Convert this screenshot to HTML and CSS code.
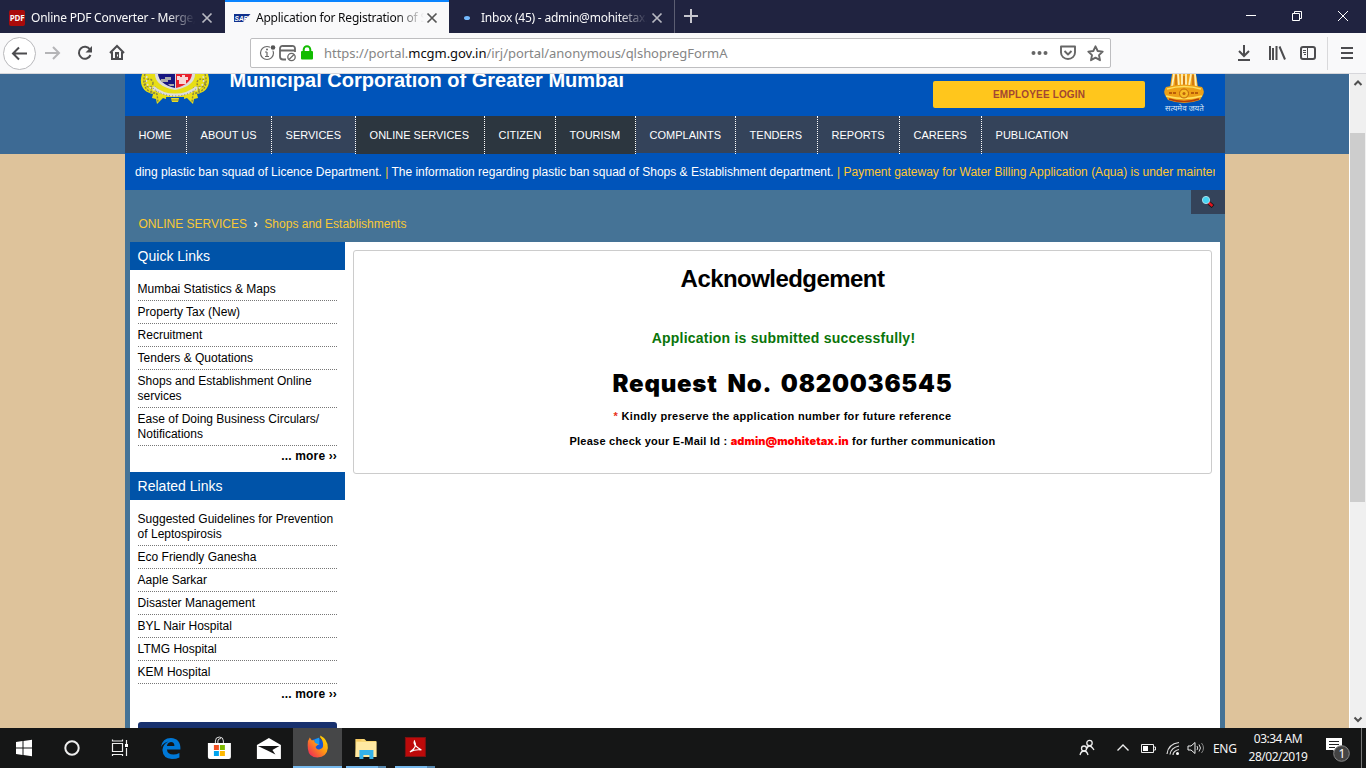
FILE: index.html
```html
<!DOCTYPE html>
<html lang="en">
<head>
<meta charset="utf-8">
<title>Application for Registration of Shops</title>
<link rel="stylesheet" href="styles.css">
</head>
<body>
<div class="window">
  <header class="tabs">
    <div class="tab">
      <span class="fav-pdf">PDF</span>
      <span class="tab-title t1">Online PDF Converter - Merge, convert</span>
      <svg class="tab-close" width="12" height="12" viewBox="0 0 12 12"><path d="M1.5 1.5l9 9m0-9l-9 9"/></svg>
    </div>
    <div class="tab active">
      <svg class="fav-sap" width="17" height="10" viewBox="0 0 17 10"><path d="M0 1h16.500L9 9H0z" fill="#10308c"/><text x="0.500" y="7.500" textLength="13.500" lengthAdjust="spacingAndGlyphs">SAP</text></svg>
      <span class="tab-title t2">Application for Registration of Shops</span>
      <svg class="tab-close" width="12" height="12" viewBox="0 0 12 12"><path d="M1.5 1.5l9 9m0-9l-9 9"/></svg>
    </div>
    <div class="tab">
      <span class="fav-dot"></span>
      <span class="tab-title t3">Inbox (45) - admin@mohitetax.in</span>
      <svg class="tab-close" width="12" height="12" viewBox="0 0 12 12"><path d="M1.5 1.5l9 9m0-9l-9 9"/></svg>
    </div>
    <svg class="new-tab" width="32" height="33" viewBox="0 0 32 33"><path d="M16 9v14M9 16h14"/></svg>
    <div class="controls">
      <svg width="46" height="32" viewBox="0 0 46 32"><path d="M18 15.500h10"/></svg>
      <svg width="46" height="32" viewBox="0 0 46 32"><path d="M18.500 13.500h7v7h-7zM20.500 13v-1.500h7v7h-1.500"/></svg>
      <svg width="46" height="32" viewBox="0 0 46 32"><path d="M18 11l10 10m0-10l-10 10"/></svg>
    </div>
  </header>

  <div class="toolbar">
    <svg class="tool back" width="33" height="33" viewBox="0 0 33 33"><circle cx="16.500" cy="16.500" r="16"/><path d="M24 16.500H10m6-6l-6 6 6 6"/></svg>
    <svg class="tool dim" width="32" height="32" viewBox="0 0 32 32"><path d="M9 16h14m-6-6l6 6-6 6"/></svg>
    <svg class="tool" width="32" height="32" viewBox="0 0 32 32"><path d="M22 12.500A6 6 0 1 0 22.500 18"/><path class="solid" d="M24 9v6.500h-6.500z"/></svg>
    <svg class="tool" width="32" height="32" viewBox="0 0 32 32"><path d="M10 16l7-7 7 7M12 15v7h10v-7"/><path class="solid" d="M15 15h4v6h-4z"/><path stroke="#f9f9fa" stroke-width="1" d="M17.500 17.500v2"/></svg>
    <div class="urlbar">
      <svg width="50" height="28" viewBox="0 0 50 28">
        <g fill="none" stroke="#686868" stroke-width="1.200"><circle cx="16" cy="14" r="6.500"/><path d="M16 13v4.500M14 17.500h4M14 13h2"/></g>
        <circle cx="16" cy="10.500" r="1" fill="#686868"/><circle cx="22" cy="8.500" r="3.200" fill="#fff"/><circle cx="22" cy="8.500" r="2.300" fill="#555"/>
        <g fill="none" stroke="#686868" stroke-width="1.800"><path d="M35 20.500h-3a3 3 0 0 1-3-3v-8a2.500 2.500 0 0 1 3-2.500h9a2.500 2.500 0 0 1 3 2.500V13M29 11.500h15"/></g>
        <g fill="#fff" stroke="#686868" stroke-width="1.300"><circle cx="40.500" cy="18" r="3.700"/><path d="M38 20.500l5-5"/></g>
      </svg>
      <svg class="lock" width="12" height="28" viewBox="0 0 12 28"><path d="M2.700 13v-2.500a3.300 3.300 0 0 1 6.600 0V13" fill="none" stroke="#12bc00" stroke-width="2"/><rect y="12" width="12" height="8.500" rx="1" fill="#12bc00"/></svg>
      <span class="url">https://portal.<b>mcgm.gov.in</b>/irj/portal/anonymous/qlshopregFormA</span>
      <svg class="url-actions" width="80" height="28" viewBox="0 0 80 28">
        <g fill="#666"><circle cx="9.500" cy="14" r="2"/><circle cx="15.500" cy="14" r="2"/><circle cx="21.500" cy="14" r="2"/></g>
        <g fill="none" stroke="#666" stroke-width="1.900" stroke-linejoin="round"><path d="M37 7.500h14v6a7 6.500 0 0 1-14 0z"/><path d="M40.500 12l3.500 3.500 3.500-3.500"/><path d="M71.500 7.300l2.200 4.700 5 .6-3.700 3.500 1 5.100-4.500-2.500-4.500 2.500 1-5.100-3.700-3.500 5-.6z"/></g>
      </svg>
    </div>
    <div class="tools-right">
      <svg class="tool" width="32" height="32" viewBox="0 0 32 32"><path d="M16 8v11m-5-5l5 5 5-5M10 23h12"/></svg>
      <svg class="tool" width="32" height="32" viewBox="0 0 32 32"><path d="M10 9v14M13 11v12M16.500 9v14M19.500 9.500l5.500 13"/></svg>
      <svg class="tool" width="32" height="32" viewBox="0 0 32 32"><rect x="9" y="10" width="14" height="12" rx="2"/><path stroke-width="1" d="M15.500 10v12M11 13.500h3M11 15.500h3M12 17.500h2"/></svg>
      <i class="tool-sep"></i>
      <svg class="tool menu" width="32" height="32" viewBox="0 0 32 32"><path d="M10 11h12M10 16h12M10 21h12"/></svg>
    </div>
  </div>

  <div class="viewport">
    <main class="page">
      <div class="site">
        <div class="masthead">
          <svg class="crest" width="72" height="32" viewBox="0 0 72 32">
            <path d="M3 0C-1 12 6 19 14 20l-1 4 4 1 1 5 6-6 12 4 12-4 6 6 1-5 4-1-1-4c8-1 15-8 11-20z" fill="#e7de16"/>
            <g fill="none" stroke="#8b8740" stroke-width="1.400" stroke-dasharray="2 1.300"><path d="M6 0q-5 17 12 20l1 8M66 0q5 17-12 20l-1 8"/><circle cx="10" cy="9" r="4"/><circle cx="62" cy="9" r="4"/><circle cx="15" cy="16" r="3"/><circle cx="57" cy="16" r="3"/></g>
            <g fill="none" stroke="#ddd" stroke-width="1.500" stroke-dasharray="2 2"><path d="M8 2q-3 10 9 15M64 2q3 10-9 15"/></g>
            <path d="M16 0q0 12 20 16 20-4 20-16z" fill="#ddd"/>
            <path d="M19 0q1 10 17 14V0z" fill="#171681"/><path d="M37 0v14q15-4 16-14z" fill="#e9202c"/>
            <path d="M22 5h4V3h6v3h-3v2h-7zM29 10h6v2h-4z" fill="#aaa"/><path d="M38 2h3v1h2V1h3v2h3v3h-2v4h-7V6h-2z" fill="#f7d7d7"/>
            <path d="M14 13q9 8 22 8t22-8" fill="none" stroke="#ddd" stroke-width="3"/><path d="M14 14q9 8 22 8t22-8" fill="none" stroke="#777" stroke-dasharray="1 2"/>
            <path d="M27 23h18v8H27z" fill="#0054ba"/><path d="M32 24h8l-1 4h-6z" fill="#e8dd25"/><path d="M32 26h8" stroke="#8b8740"/>
          </svg>
          <h1>Municipal Corporation of Greater Mumbai</h1>
          <a class="login">EMPLOYEE LOGIN</a>
          <div class="national">
            <svg width="42" height="31" viewBox="0 0 42 31"><path d="M9 0h24l2 13H7z" fill="#f0a51b"/><path d="M11 0l-2 13M15 0l1 12M19 0v13M23 0v13M28 0l-2 12M32 0l1 13" stroke="#fff1b8" stroke-width="1.800"/><path d="M13 1v11M21 2v11M30 1v11" stroke="#b4520b"/><path d="M3 13q18-5 36 0 3 4 1 8l-3 5q-16 6-32 0l-3-5q-2-4 1-8z" fill="#eda016"/><path d="M4 15q17-5 34 0M3 22q18 5 36 0" fill="none" stroke="#ffdf5d" stroke-width="1.500"/><path d="M6 25q15 5 30 0" fill="none" stroke="#b33d08" stroke-width="1.500"/><circle cx="21" cy="19.500" r="4.500" fill="#f8bd27" stroke="#bd640a"/><circle cx="21" cy="19.500" r="1.500" fill="#bd640a"/><path d="M6 19h8M28 19h8" stroke="#b95d09" stroke-width="2" stroke-dasharray="3 1"/></svg>
            <span>सत्यमेव जयते</span>
          </div>
        </div>
        <nav class="nav">
          <a>HOME</a><a>ABOUT US</a><a>SERVICES</a><a class="dark">ONLINE SERVICES</a><a class="dark">CITIZEN</a><a class="dark">TOURISM</a><a>COMPLAINTS</a><a>TENDERS</a><a>REPORTS</a><a>CAREERS</a><a>PUBLICATION</a>
        </nav>
        <div class="ticker"><p>ding plastic ban squad of Licence Department. <i>|</i> The information regarding plastic ban squad of Shops &amp; Establishment department. <i>| Payment gateway for Water Billing Application (Aqua) is under maintenance</i></p></div>
        <div class="subhead">
          <p class="crumbs"><a>ONLINE SERVICES</a><b>›</b><a>Shops and Establishments</a></p>
          <span class="search"><svg width="14" height="14" viewBox="0 0 14 14"><path d="M8 8l4 3.500" stroke="#111" stroke-width="4"/><path d="M7.500 7.500l4 3.500" stroke="#e0141f" stroke-width="2.400"/><circle cx="5" cy="5" r="3.600" fill="#45d4f5" stroke="#a9dce9"/></svg></span>
        </div>
        <div class="body">
          <aside class="sidebar">
            <h2>Quick Links</h2>
            <ul>
              <li>Mumbai Statistics &amp; Maps</li><li>Property Tax (New)</li><li>Recruitment</li><li>Tenders &amp; Quotations</li><li>Shops and Establishment Online services</li><li>Ease of Doing Business Circulars/ Notifications</li>
            </ul>
            <a class="more">... more ››</a>
            <h2>Related Links</h2>
            <ul>
              <li>Suggested Guidelines for Prevention of Leptospirosis</li><li>Eco Friendly Ganesha</li><li>Aaple Sarkar</li><li>Disaster Management</li><li>BYL Nair Hospital</li><li>LTMG Hospital</li><li>KEM Hospital</li>
            </ul>
            <a class="more">... more ››</a>
            <div class="banner"></div>
          </aside>
          <section class="ack">
            <h2>Acknowledgement</h2>
            <p class="ok">Application is submitted successfully!</p>
            <p class="request">Request No. 0820036545</p>
            <p class="note keep"><i>*</i> Kindly preserve the application number for future reference</p>
            <p class="note mail">Please check your E-Mail Id : <b>admin@mohitetax.in</b> for further communication</p>
          </section>
        </div>
      </div>
    </main>
    <div class="scrollbar">
      <svg width="17" height="17" viewBox="0 0 17 17"><path d="M4.500 11L8 7.500l3.500 3.500"/></svg>
      <i class="thumb"></i>
      <svg class="down" width="17" height="17" viewBox="0 0 17 17"><path d="M4.500 6.500L8 10l3.500-3.500"/></svg>
    </div>
  </div>

  <footer class="taskbar">
    <svg class="app sys" viewBox="0 0 48 40"><path fill="#fff" d="M16 14l6.500-1v6.500H16zM23.500 12.900L32 11.700v7.800h-8.500zM16 20.500h6.500V27L16 26zM23.500 20.500H32v7.800l-8.500-1.200z"/></svg>
    <svg class="app sys" viewBox="0 0 48 40"><circle cx="24" cy="20" r="6.700" fill="none" stroke="#eee" stroke-width="2"/></svg>
    <svg class="app sys" viewBox="0 0 48 40"><path d="M16.500 11.500V13h10v-1.500M16.500 28v-1.500h10V28M16.500 15.500h10v8h-10zM30.500 12v4M30.500 20v8" fill="none" stroke="#eee" stroke-width="1.200"/><path d="M29 16h3v3h-3z" fill="#fff"/></svg>
    <svg class="app first" viewBox="0 0 48 40"><path d="M13.500 19Q15 10 23.500 10 33.500 10.500 33 21.500H19.500Q20 26.500 26 26.500q3 0 6-1.500v4.500Q29 31 24.500 31q-9-.500-9.500-9 .5-6 6-8.500-5 1-7.500 5.500zM19.500 18H27q0-4-3.500-4-3.500.5-4 4z" fill="#0078d7"/></svg>
    <svg class="app" viewBox="0 0 48 40"><path d="M19 15v-2q0-4 4-4t4 4v2M21.500 15v-2q0-2.500 3-2.500" fill="none" stroke="#ddd"/><path d="M11.500 15h23v14q0 2-2 2h-19q-2 0-2-2z" fill="#fff"/><path fill="#f25022" d="M17.500 17h5v5h-5z"/><path fill="#7fba00" d="M23.500 17h5v5h-5z"/><path fill="#00a4ef" d="M17.500 23h5v5h-5z"/><path fill="#ffb900" d="M23.500 23h5v5h-5z"/></svg>
    <svg class="app" viewBox="0 0 48 40"><path d="M11.500 17l12-7 12 7v14h-24z" fill="#fff"/><path d="M12.500 18H34l-7 4 3 4.500-8-4z" fill="#151515"/></svg>
    <svg class="app current" viewBox="0 0 48 40"><defs><linearGradient id="ff" x1="1" y1="0" x2="0" y2="1"><stop offset="0" stop-color="#ffe900"/><stop offset=".45" stop-color="#ff9813"/><stop offset="1" stop-color="#ed1663"/></linearGradient></defs><circle cx="23.500" cy="19.500" r="8.500" fill="#1557d5"/><path d="M21 12l5-2v8h-5z" fill="#1b9bef"/><path d="M14 14l2-4 2 3 3 0q-1 3 4 4l-3 3q2 4 5 2 3 0 3-4 0-5-3-8V8q8 4 8 13-1 9.500-11 10-9 0-10-9-.5-4 0-8z" fill="url(#ff)"/></svg>
    <svg class="app running" viewBox="0 0 48 40"><path d="M13 11h9l2 2h10v16H13z" fill="#f8d775"/><path d="M14 14h20v15H13z" fill="#ffe9a2"/><path d="M17 31v-9h14v9h-4v-4h-6v4z" fill="#35b2ea"/><path d="M14 12h5" stroke="#f6b84a"/></svg>
    <svg class="app running" viewBox="0 0 48 40"><rect x="14" y="9.500" width="20" height="19" fill="#bd0a0a" stroke="#7e1111"/><path d="M18.500 24q8-5 4.500-11-2 4 7 9-6-1-11.500 2z" fill="none" stroke="#fff" stroke-width="1.200"/></svg>
    <div class="tray">
      <svg width="20" height="20" viewBox="0 0 20 20"><g fill="none" stroke="#eee" stroke-width="1.300"><circle cx="12.500" cy="5" r="2.700"/><path d="M9.500 11q1-3 3-3t4.500 4"/><circle cx="7" cy="10.500" r="2.500"/><path d="M3 17q1-4 4-4t4 4"/></g></svg>
      <svg class="chev" width="14" height="20" viewBox="0 0 14 20"><path d="M1.500 12.500L7 7l5.500 5.500" fill="none" stroke="#eee" stroke-width="1.400"/></svg>
      <svg class="bat" width="17" height="20" viewBox="0 0 17 20"><path d="M1.500 6.500h12v8h-12zM13.500 9h2v3h-2" fill="none" stroke="#eee"/><path d="M3 8h5v5H3z" fill="#fff"/></svg>
      <svg class="wifi" width="15" height="20" viewBox="0 0 15 20"><g fill="none" stroke="#ddd" stroke-width="1.200"><path d="M1 16Q2 6 13 4.500M4 16.500q1-7 9-8.500M7 17q0-4 6-5.500"/></g><circle cx="11.500" cy="15.500" r="1.500" fill="#fff"/></svg>
      <svg class="vol" width="18" height="20" viewBox="0 0 18 20"><path d="M1 8h3l4-3.500v11L4 12H1z" fill="none" stroke="#eee"/><path d="M10 8q1.500 2 0 4M12 6.500q3 3.500 0 7" fill="none" stroke="#ddd"/><path d="M14.500 5q4 5 0 10" fill="none" stroke="#888"/></svg>
      <span class="lang">ENG</span>
      <span class="clock">03:34 AM<br>28/02/2019</span>
      <svg class="notif" width="26" height="28" viewBox="0 0 26 28"><path d="M1 4h16v12h-5v4l-4-4H1z" fill="#fff"/><path d="M4 7.500h10M4 10.500h10M4 13.500h6" stroke="#222"/><circle cx="16.500" cy="19.500" r="7.800" fill="#444" stroke="#888"/><text x="13.500" y="24">1</text></svg>
      <i class="desktop-line"></i>
    </div>
  </footer>
</div>
</body>
</html>
```

FILE: styles.css
```css
* { box-sizing: border-box; }
body, h1, h2, p, ul { margin: 0; padding: 0; }
body { font-family: "Liberation Sans", Arial, sans-serif; }
svg { display: block; flex: none; }
i { font-style: normal; }
.window { width: 1366px; height: 768px; overflow: hidden; display: flex; flex-direction: column; }

/* tab strip */
.tabs { height: 33px; flex: none; background: #202340; display: flex; font: 12px "Noto Sans", sans-serif; color: #f9f9fa; }
.tab { width: 225px; height: 33px; padding: 2px 12px 0 9px; display: flex; align-items: center; }
.tab.active { width: 224px; background: #f9f9fa; color: #0c0c0d; border-top: 2px solid #0a84ff; padding-top: 0; padding-right: 11px; }
.tab:nth-child(3) { width: 226px; padding-left: 15px; padding-right: 11px; border-right: 1px solid #5c5e72; }
.fav-pdf { width: 16px; height: 16px; flex: none; border-radius: 2px; background: #a90b0b; font: bold 8px/16px "Open Sans", sans-serif; letter-spacing: -.3px; text-align: center; }
.fav-sap text { fill: #fff; font: bold italic 7.5px "Liberation Sans", sans-serif; }
.fav-dot { width: 6px; height: 4px; flex: none; border-radius: 50%; background: #75baff; }
.tab-title { height: 18px; line-height: 18px; overflow: hidden; white-space: nowrap; flex: none; letter-spacing: -.23px; -webkit-mask-image: linear-gradient(to right, #000 calc(100% - 28px), transparent); }
.t1 { width: 164px; margin-left: 6px; }
.t2 { width: 168px; margin-left: 5px; }
.t3 { width: 166px; margin-left: 11px; }
.tab-close { margin-left: auto; fill: none; stroke: #b7b8c1; stroke-width: 1.7; }
.active .tab-close { stroke: #555; }
.new-tab { stroke: #c6c6ce; stroke-width: 2; }
.controls { margin-left: auto; display: flex; fill: none; stroke: #fff; }

/* navigation toolbar */
.toolbar { height: 41px; flex: none; background: #f9f9fa; border-bottom: 1px solid #d7d7db; display: flex; align-items: center; padding: 0 3px; }
.tool { fill: none; stroke: #4c4c4f; stroke-width: 2; }
.tool .solid { fill: #4c4c4f; stroke: none; }
.back circle { fill: #fff; stroke: #b8b8bb; stroke-width: 1; }
.dim { stroke: #b5b5b7; }
.urlbar { width: 861px; height: 30px; margin-left: 118px; border: 1px solid #bebec0; border-radius: 2px; background: #fff; display: flex; align-items: center; }
.url { margin-left: 11px; font: 13px "Noto Sans", sans-serif; letter-spacing: -.04px; color: #858585; }
.url b { font-weight: normal; color: #0c0c0d; }
.url-actions { margin-left: auto; margin-right: 6px; overflow: visible; }
.tools-right { margin-left: 117px; display: flex; align-items: center; }
.tool-sep { width: 1px; height: 33px; margin: 0 3px; background: #d9d9db; }

/* site */
.viewport { height: 654px; flex: none; display: flex; overflow: hidden; }
.page { width: 1349px; padding-left: 125px; background: linear-gradient(#3d6a94 80px, #dec39b 80px); display: flex; }
.site { width: 1100px; background: #457396; }
.masthead { height: 42px; background: #0054ba; display: flex; align-items: flex-start; padding-left: 14px; }
.masthead h1 { width: 394px; margin: -5px 0 0 18.5px; color: #fff; font-size: 20px; line-height: 23px; white-space: nowrap; }
.login { width: 212px; height: 27px; margin: 7px 0 0 309.5px; border-radius: 2px; background: #ffc61c; color: #a24632; font: bold 10px/27px "Liberation Sans", sans-serif; letter-spacing: .15px; text-align: center; }
.national { margin-left: 18px; width: 42px; height: 42px; color: #d7e4f5; }
.national span { display: block; padding-left: 2px; font: 8px/8px "Noto Sans Devanagari", "Noto Sans", sans-serif; white-space: nowrap; }
.nav { height: 37px; background: #34435a; display: grid; grid-template-columns: 62px 85px 84px 129px 71px 80px 100px 82px 82px 82px 1fr; }
.nav a { padding-left: 13.6px; color: #fff; font-size: 11px; line-height: 38px; border-right: 1px dotted #fff; white-space: nowrap; }
.nav a:last-child { border: 0; }
.nav .dark { background: #2c363f; }
.ticker { height: 37px; background: #0054ba; padding: 0 10px; }
.ticker p { overflow: hidden; white-space: nowrap; color: #fff; font-size: 12px; line-height: 38px; height: 37px; }
.ticker i { color: #ffc733; }
.subhead { height: 52px; display: flex; justify-content: space-between; align-items: flex-start; }
.crumbs { padding: 26px 0 0 13.5px; font-size: 12px; line-height: 16px; color: #f9c834; }
.crumbs b { color: #fff; margin: 0 6.7px; }
.search { width: 34px; height: 24px; background: #34435a; display: flex; align-items: center; justify-content: center; }
.body { height: 600px; margin: 0 5px; background: #fff; display: flex; align-items: flex-start; }
.sidebar { width: 215px; flex: none; }
.sidebar h2 { height: 28px; padding-left: 7.6px; background: #0053a8; color: #fff; font: 14px/28px "Liberation Sans", sans-serif; }
.sidebar ul { margin: 8px 8px 0; list-style: none; }
.sidebar li { margin-left: -.4px; padding: 4px 0 3px; border-bottom: 1px dotted #777; font-size: 12px; line-height: 15px; }
.more { display: block; height: 26px; padding-right: 8px; text-align: right; font: bold 12px/20px "Liberation Sans", sans-serif; letter-spacing: .15px; }
.banner { height: 40px; margin: 12px 8px 0; border-radius: 3px; background: #18316e; }
.ack { width: 859px; height: 224px; margin: 8px 0 0 8px; border: 1px solid #ccc; border-radius: 3px; text-align: center; display: flex; flex-direction: column; align-items: center; }
.ack h2 { margin-top: 14px; font-size: 24px; line-height: 28px; letter-spacing: -.55px; }
.ok { margin-top: 37px; padding-left: 2px; color: #0a750a; font-size: 14px; font-weight: bold; line-height: 16px; letter-spacing: .22px; }
.request { margin-top: 22px; font: 900 24px/32px Inter, sans-serif; letter-spacing: .75px; word-spacing: 4.5px; white-space: nowrap; }
.note { font-size: 11px; font-weight: bold; line-height: 14px; letter-spacing: .32px; }
.keep { margin-top: 9px; }
.keep i { color: #e8301a; font-weight: bold; }
.mail { margin-top: 11px; letter-spacing: .24px; }
.mail b { color: #f00; font-family: Inter, sans-serif; font-weight: 900; letter-spacing: .06px; }

.scrollbar { width: 17px; background: #f0f0f0; border-left: 1px solid #fff; display: flex; flex-direction: column; fill: none; stroke: #505050; stroke-width: 2; }
.thumb { height: 369px; margin: 42px 0 0; width: 15px; background: #cdcdcd; }
.down { margin-top: auto; }

/* taskbar */
.taskbar { height: 40px; flex: none; background: #151616; display: flex; color: #f5f5f5; font: 12px "Noto Sans", sans-serif; }
.app { width: 48.8px; height: 40px; }
.sys { width: 48px; }
.first { margin-left: 3px; }
.current { background: #464748; border-bottom: 2px solid #76b9ed; }
.running { background: linear-gradient(to right, transparent 4px, #76b9ed 4px 36px, #5788af 36px 44px, transparent 44px) bottom / 100% 2px no-repeat; }
.tray { margin-left: auto; display: flex; align-items: center; }
.chev { margin-left: 19px; }
.bat { margin-left: 10px; }
.wifi { margin-left: 9px; }
.vol { margin-left: 6px; }
.lang { width: 24px; margin-left: 8px; letter-spacing: -.3px; }
.clock { width: 60px; margin-left: 11px; line-height: 18px; letter-spacing: -.5px; text-align: center; white-space: nowrap; }
.notif { margin-left: 17px; }
.notif text { fill: #fff; font: 12px "Noto Sans", sans-serif; }
.desktop-line { width: 1px; height: 40px; margin: 0 4px 0 10px; background: #777; }
```
